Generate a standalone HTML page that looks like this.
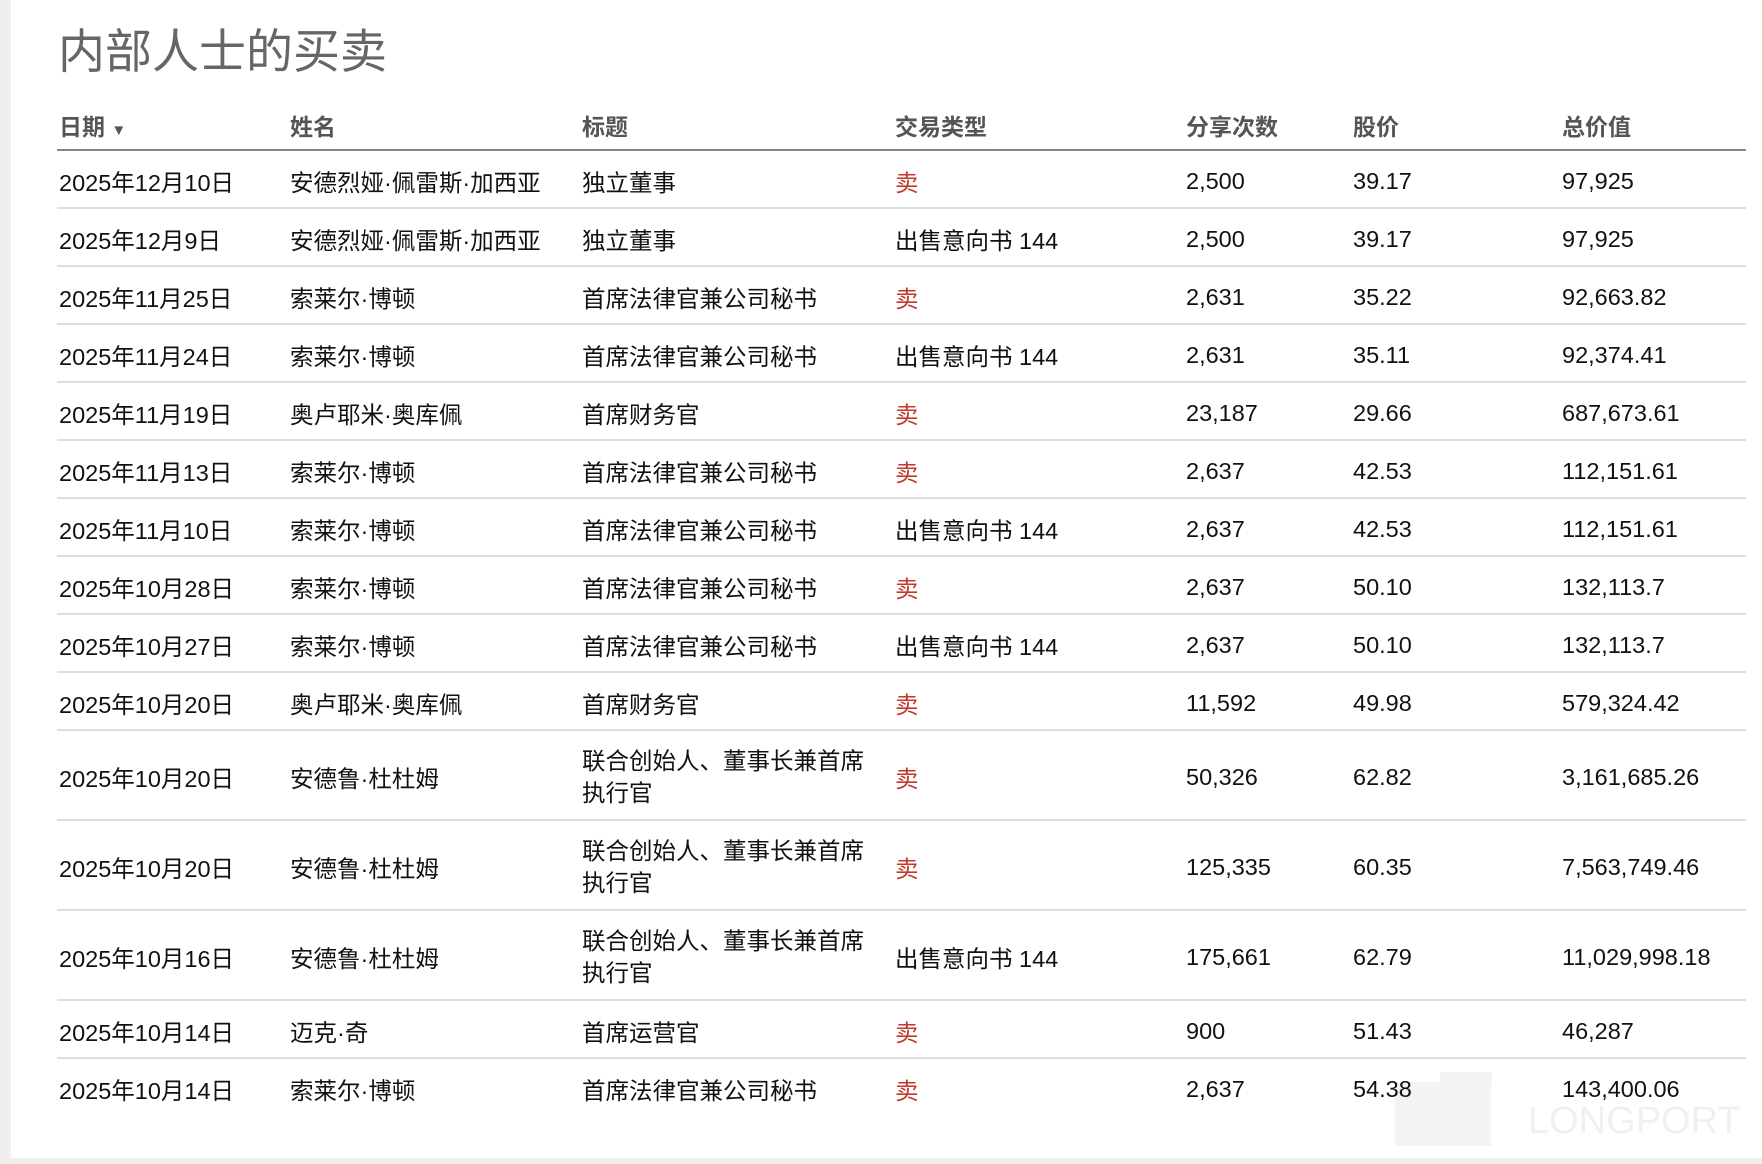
<!DOCTYPE html>
<html><head><meta charset="utf-8"><style>
html,body{margin:0;padding:0;width:1762px;height:1164px;overflow:hidden;background:#fff;font-family:"Liberation Sans","Noto Sans CJK SC",sans-serif;color:#111;}
.lb{position:absolute;left:0;top:0;width:11px;height:1164px;background:#f1eeee;}
.bb{position:absolute;left:0;top:1158px;width:1762px;height:6px;background:#f1eeee;}
h1{position:absolute;left:58px;top:13px;margin:0;font-size:47px;font-weight:normal;color:#666;}
table{position:absolute;left:57px;top:100px;width:1689px;border-collapse:collapse;font-size:23.5px;}
th{text-align:left;font-weight:bold;color:#555;height:49px;padding:0 0 0 2px;border-bottom:2px solid #7d8888;vertical-align:middle;font-size:23px;}
td{height:52px;padding:4px 0 0 2px;border-bottom:2px solid #ddd;vertical-align:middle;}
tr.t td{height:84px;}
.r{color:#c0392b;}
.w{width:290px;line-height:32px;}
.wm{position:absolute;left:1528px;top:1100px;font-size:38px;color:#f0f0f0;}
.wb{position:absolute;left:1395px;top:1082px;width:96px;height:64px;background:#f3f3f3;}
.wb2{position:absolute;left:1440px;top:1072px;width:52px;height:12px;background:#f3f3f3;}
</style></head><body>
<div class="lb"></div>
<h1>内部人士的买卖</h1>
<div class="wb"></div><div class="wb2"></div>
<div class="wm">LONGPORT</div>
<table>
<colgroup><col style="width:231px"><col style="width:292px"><col style="width:313px"><col style="width:291px"><col style="width:167px"><col style="width:209px"><col></colgroup>
<tr><th>日期 <span style="font-size:15px">▼</span></th><th>姓名</th><th>标题</th><th>交易类型</th><th>分享次数</th><th>股价</th><th>总价值</th></tr>
<tr><td>2025年12月10日</td><td>安德烈娅·佩雷斯·加西亚</td><td>独立董事</td><td class="r">卖</td><td>2,500</td><td>39.17</td><td>97,925</td></tr>
<tr><td>2025年12月9日</td><td>安德烈娅·佩雷斯·加西亚</td><td>独立董事</td><td>出售意向书 144</td><td>2,500</td><td>39.17</td><td>97,925</td></tr>
<tr><td>2025年11月25日</td><td>索莱尔·博顿</td><td>首席法律官兼公司秘书</td><td class="r">卖</td><td>2,631</td><td>35.22</td><td>92,663.82</td></tr>
<tr><td>2025年11月24日</td><td>索莱尔·博顿</td><td>首席法律官兼公司秘书</td><td>出售意向书 144</td><td>2,631</td><td>35.11</td><td>92,374.41</td></tr>
<tr><td>2025年11月19日</td><td>奥卢耶米·奥库佩</td><td>首席财务官</td><td class="r">卖</td><td>23,187</td><td>29.66</td><td>687,673.61</td></tr>
<tr><td>2025年11月13日</td><td>索莱尔·博顿</td><td>首席法律官兼公司秘书</td><td class="r">卖</td><td>2,637</td><td>42.53</td><td>112,151.61</td></tr>
<tr><td>2025年11月10日</td><td>索莱尔·博顿</td><td>首席法律官兼公司秘书</td><td>出售意向书 144</td><td>2,637</td><td>42.53</td><td>112,151.61</td></tr>
<tr><td>2025年10月28日</td><td>索莱尔·博顿</td><td>首席法律官兼公司秘书</td><td class="r">卖</td><td>2,637</td><td>50.10</td><td>132,113.7</td></tr>
<tr><td>2025年10月27日</td><td>索莱尔·博顿</td><td>首席法律官兼公司秘书</td><td>出售意向书 144</td><td>2,637</td><td>50.10</td><td>132,113.7</td></tr>
<tr><td>2025年10月20日</td><td>奥卢耶米·奥库佩</td><td>首席财务官</td><td class="r">卖</td><td>11,592</td><td>49.98</td><td>579,324.42</td></tr>
<tr class="t"><td>2025年10月20日</td><td>安德鲁·杜杜姆</td><td><div class="w">联合创始人、董事长兼首席执行官</div></td><td class="r">卖</td><td>50,326</td><td>62.82</td><td>3,161,685.26</td></tr>
<tr class="t"><td>2025年10月20日</td><td>安德鲁·杜杜姆</td><td><div class="w">联合创始人、董事长兼首席执行官</div></td><td class="r">卖</td><td>125,335</td><td>60.35</td><td>7,563,749.46</td></tr>
<tr class="t"><td>2025年10月16日</td><td>安德鲁·杜杜姆</td><td><div class="w">联合创始人、董事长兼首席执行官</div></td><td>出售意向书 144</td><td>175,661</td><td>62.79</td><td>11,029,998.18</td></tr>
<tr><td>2025年10月14日</td><td>迈克·奇</td><td>首席运营官</td><td class="r">卖</td><td>900</td><td>51.43</td><td>46,287</td></tr>
<tr><td style="border:0">2025年10月14日</td><td style="border:0">索莱尔·博顿</td><td style="border:0">首席法律官兼公司秘书</td><td style="border:0" class="r">卖</td><td style="border:0">2,637</td><td style="border:0">54.38</td><td style="border:0">143,400.06</td></tr>
</table>
<div class="bb"></div>
</body></html>
